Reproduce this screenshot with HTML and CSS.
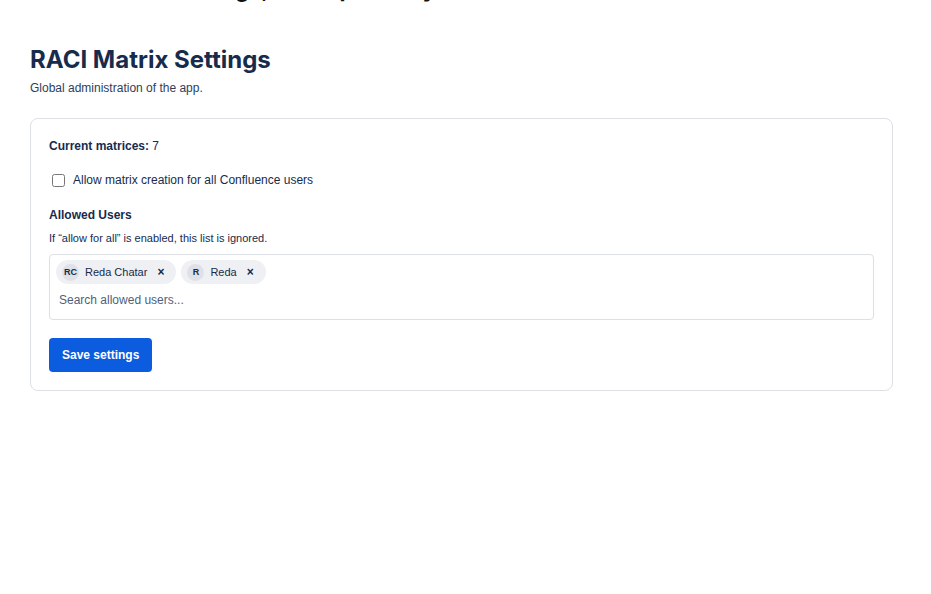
FILE: index.html
```html
<!DOCTYPE html>
<html lang="en">
<head>
    <meta charset="UTF-8">
    <meta name="viewport" content="width=device-width, initial-scale=1.0">
    <title>RACI Matrix Settings</title>
    <link rel="stylesheet" href="styles.css">
</head>
<body>
    <div class="page-title">Admin settings, workspace key</div>

    <div class="container">
        <h1>RACI Matrix Settings</h1>
        <p class="subtitle">Global administration of the app.</p>

        <div class="card">
            <div class="count"><strong>Current matrices:</strong> 7</div>

            <label class="check">
                <input type="checkbox" id="allowAll">
                <span>Allow matrix creation for all Confluence users</span>
            </label>

            <h3>Allowed Users</h3>
            <p class="hint">If “allow for all” is enabled, this list is ignored.</p>

            <div class="picker">
                <div class="chips">
                    <span class="chip"><span class="avatar">RC</span>Reda Chatar<span class="remove">&times;</span></span>
                    <span class="chip"><span class="avatar">R</span>Reda<span class="remove">&times;</span></span>
                </div>
                <input class="search" type="text" placeholder="Search allowed users...">
            </div>

            <button class="save">Save settings</button>
        </div>
    </div>
</body>
</html>
```

FILE: styles.css
```css
body {
    margin: 0;
    font-family: "Liberation Sans", Arial, sans-serif;
    color: #172b4d;
    background-color: #ffffff;
}

.page-title {
    font-family: Inter, "Liberation Sans", sans-serif;
    font-size: 22px;
    font-weight: 700;
    color: #111111;
    line-height: 28px;
    height: 28px;
    margin-top: -25px;
    padding-left: 100px;
    white-space: nowrap;
}

.container {
    padding: 42px 38px 0 30px;
}

h1 {
    font-family: Inter, "Liberation Sans", sans-serif;
    font-size: 24px;
    font-weight: 700;
    line-height: 30px;
    margin: 0;
    color: #172b4d;
}

.subtitle {
    font-size: 12px;
    margin: 6px 0 0;
    color: #2c3e5d;
}

.card {
    margin-top: 23px;
    border: 1px solid #dcdfe4;
    border-radius: 8px;
    padding: 19px 18px 18px 18px;
}

.count {
    font-size: 12px;
    line-height: 16px;
}

.check {
    display: flex;
    align-items: center;
    gap: 8px;
    margin-top: 19px;
    padding-left: 3px;
    font-size: 12px;
}

.check input {
    margin: 0;
    width: 13px;
    height: 13px;
}

h3 {
    font-size: 12px;
    font-weight: 700;
    margin: 20px 0 0;
    line-height: 16px;
}

.hint {
    font-size: 11px;
    margin: 8px 0 0;
    line-height: 14px;
}

.picker {
    margin-top: 9px;
    border: 1px solid #dcdfe4;
    border-radius: 4px;
    padding: 5px 6px 8px;
}

.chips {
    display: flex;
    gap: 5px;
}

.chip {
    display: inline-flex;
    align-items: center;
    height: 24px;
    padding: 0 12px 0 6px;
    border-radius: 12px;
    background-color: #eef0f3;
    font-size: 11px;
    color: #172b4d;
}

.avatar {
    width: 17px;
    height: 17px;
    border-radius: 50%;
    background-color: #dfe1e6;
    font-size: 9px;
    font-weight: 700;
    display: inline-flex;
    justify-content: center;
    align-items: center;
    margin-right: 6px;
}

.remove {
    font-size: 12px;
    font-weight: 700;
    margin-left: 10px;
    line-height: 1;
}

.search {
    display: block;
    width: 100%;
    box-sizing: border-box;
    border: none;
    outline: none;
    font-family: "Liberation Sans", Arial, sans-serif;
    font-size: 12px;
    padding: 0 3px;
    margin-top: 5px;
    height: 22px;
    color: #172b4d;
}

.search::placeholder {
    color: #505f79;
}

.save {
    margin-top: 18px;
    height: 34px;
    padding: 0 13px;
    background-color: #0b5cde;
    color: white;
    border: none;
    border-radius: 4px;
    font-family: "Liberation Sans", Arial, sans-serif;
    font-size: 12px;
    font-weight: 700;
    cursor: pointer;
}

.save:hover {
    background-color: #0a4fbf;
}
```
